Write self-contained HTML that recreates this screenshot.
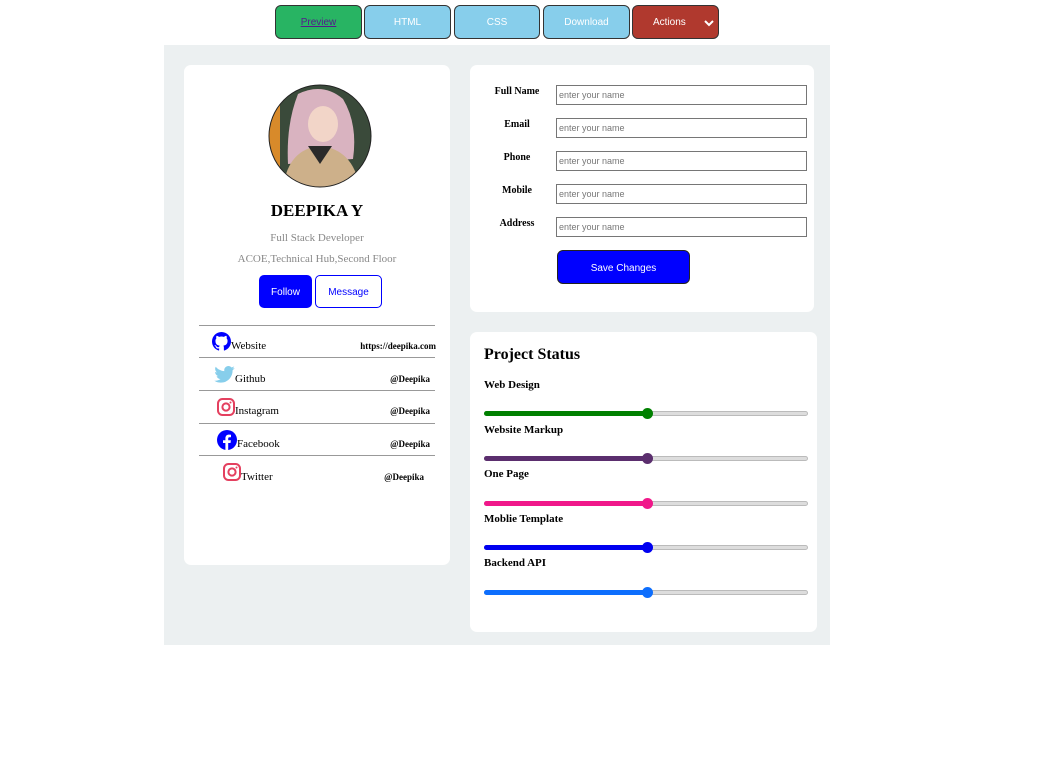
<!DOCTYPE html>
<html><head><meta charset="utf-8"><style>
*{margin:0;padding:0;box-sizing:border-box}
body{width:1045px;height:768px;background:#fff;position:relative;font-family:"Liberation Serif",serif;overflow:hidden}
.a{position:absolute}
.tb{position:absolute;top:5px;height:34px;border:1px solid #333;border-radius:6px;font-family:"Liberation Sans",sans-serif;font-size:10px;color:#fff;display:flex;align-items:center;justify-content:center}
.card{position:absolute;background:#fff;border-radius:7px}
.lbl{position:absolute;font-weight:bold;font-size:10px;width:70px;text-align:center;left:482px}
.inp{position:absolute;left:556px;width:251px;height:20px;border:1px solid #767676;font-family:"Liberation Sans",sans-serif;font-size:9px;color:#777;padding:4px 0 0 2px}
.row{position:absolute;left:199px;width:236px;border-top:1px solid #999;height:33px}
.row span{position:absolute;font-size:11px}
.row b{position:absolute;font-size:9px;right:0}
.sl{position:absolute;left:484px;width:324px;height:5px;border:1px solid #bbb;border-radius:3px;background:#ddd}
.sl i{position:absolute;left:-1px;top:-1px;height:5px;width:163px;border-radius:3px}
.sl em{position:absolute;left:157px;top:-4px;width:11px;height:11px;border-radius:50%}
.pl{position:absolute;left:484px;font-weight:bold;font-size:11px}
</style></head><body>
<div class="tb" style="left:275px;width:87px;background:#28b463"><u style="color:#551a8b">Preview</u></div>
<div class="tb" style="left:364px;width:87px;background:#87ceeb">HTML</div>
<div class="tb" style="left:454px;width:86px;background:#87ceeb">CSS</div>
<div class="tb" style="left:543px;width:87px;background:#87ceeb">Download</div>
<div class="tb" style="left:632px;width:87px;background:#b0392e;justify-content:flex-start;padding-left:20px">Actions<svg class="a" style="left:71px;top:13px" width="10" height="8" viewBox="0 0 10 8"><path d="M1 2l4 4 4-4" stroke="#fff" stroke-width="2" fill="none"/></svg></div>

<div class="a" style="left:164px;top:45px;width:666px;height:600px;background:#ecf0f1"></div>

<div class="card" style="left:184px;top:65px;width:266px;height:500px"></div>
<svg class="a" style="left:268px;top:84px" width="104" height="104" viewBox="0 0 104 104">
<defs><clipPath id="c"><circle cx="52" cy="52" r="51"/></clipPath></defs>
<g clip-path="url(#c)">
<rect width="104" height="104" fill="#3a4a3a"/>
<rect x="0" y="20" width="12" height="70" fill="#d88a2a"/>
<path d="M30 10 Q55 -2 75 15 Q90 40 85 75 L20 80 Q18 40 30 10Z" fill="#d9b3c0"/>
<ellipse cx="55" cy="40" rx="15" ry="18" fill="#f2d5c8"/>
<path d="M15 104 Q20 65 52 62 Q85 65 92 104Z" fill="#cdb08a"/>
<path d="M40 62 L52 80 L64 62Z" fill="#2a2a2a"/>
</g>
<circle cx="52" cy="52" r="51" fill="none" stroke="#222" stroke-width="1"/>
</svg>
<div class="a" style="left:184px;top:201px;width:266px;text-align:center;font-weight:bold;font-size:17px">DEEPIKA Y</div>
<div class="a" style="left:184px;top:232px;width:266px;text-align:center;font-size:11px;color:#888">Full Stack Developer</div>
<div class="a" style="left:184px;top:253px;width:266px;text-align:center;font-size:11px;color:#888">ACOE,Technical Hub,Second Floor</div>
<div class="a" style="left:259px;top:275px;width:53px;height:33px;background:#00f;border-radius:5px;color:#fff;font:10px 'Liberation Sans',sans-serif;display:flex;align-items:center;justify-content:center;padding-top:2px">Follow</div>
<div class="a" style="left:315px;top:275px;width:67px;height:33px;border:1px solid #00f;border-radius:5px;color:#00f;font:10px 'Liberation Sans',sans-serif;display:flex;align-items:center;justify-content:center;padding-top:2px">Message</div>

<div class="row" style="top:325px"><svg class="a" style="left:13px;top:6px" width="19" height="19" viewBox="0 0 16 16"><path fill="#00f" d="M8 0C3.6 0 0 3.6 0 8c0 3.5 2.3 6.5 5.5 7.6.4.1.5-.2.5-.4v-1.4c-2.2.5-2.7-1-2.7-1-.4-.9-.9-1.2-.9-1.2-.7-.5.1-.5.1-.5.8.1 1.200.8 1.2.8.7 1.3 1.9.9 2.3.7.1-.5.3-.9.5-1.1-1.8-.2-3.6-.9-3.6-4 0-.9.3-1.6.8-2.1-.1-.2-.4-1 .1-2.1 0 0 .7-.2 2.2.8.6-.2 1.3-.3 2-.3s1.4.1 2 .3c1.5-1 2.2-.8 2.2-.8.4 1.1.2 1.9.1 2.1.5.6.8 1.3.8 2.1 0 3.1-1.9 3.8-3.600 4 .3.3.5.8.5 1.5v2.2c0 .2.1.5.6.4C13.7 14.5 16 11.5 16 8c0-4.4-3.6-8-8-8z"/></svg><span style="left:32px;top:14px">Website</span><b style="top:15px;right:-1px">https://deepika.com</b></div>
<div class="row" style="top:357px"><svg class="a" style="left:15px;top:8px" width="21" height="17" viewBox="0 0 24 20"><path fill="#87ceeb" d="M24 2.4c-.9.4-1.8.6-2.8.8 1-.6 1.8-1.6 2.2-2.7-1 .6-2 1-3.1 1.2C19.3.7 18 0 16.6 0c-2.7 0-4.9 2.2-4.9 4.9 0 .4 0 .8.1 1.1C7.7 5.8 4.1 3.9 1.7.9c-.4.7-.7 1.6-.7 2.5 0 1.7.9 3.200 2.2 4.1-.8 0-1.6-.2-2.2-.6v.1c0 2.4 1.7 4.4 3.9 4.8-.4.1-.8.2-1.3.2-.3 0-.6 0-.9-.1.6 2 2.4 3.4 4.6 3.4-1.7 1.3-3.8 2.1-6.1 2.1H0c2.2 1.4 4.8 2.2 7.5 2.2 9.1 0 14-7.5 14-14v-.6c1-.7 1.8-1.6 2.5-2.6z"/></svg><span style="left:36px;top:15px">Github</span><b style="top:16px;right:5px">@Deepika</b></div>
<div class="row" style="top:390px"><svg class="a" style="left:18px;top:7px" width="18" height="18" viewBox="0 0 18 18"><rect x="1" y="1" width="16" height="16" rx="4.5" fill="none" stroke="#e4405f" stroke-width="2"/><circle cx="9" cy="9" r="3.6" fill="none" stroke="#e4405f" stroke-width="2"/><circle cx="13.5" cy="4.5" r="1" fill="#e4405f"/></svg><span style="left:36px;top:14px">Instagram</span><b style="top:15px;right:5px">@Deepika</b></div>
<div class="row" style="top:423px"><svg class="a" style="left:18px;top:6px" width="20" height="20" viewBox="0 0 20 20"><circle cx="10" cy="10" r="10" fill="#00f"/><path fill="#fff" d="M11.2 20v-7h2.3l.4-2.8h-2.7V8.5c0-.8.3-1.3 1.4-1.3H14V4.7c-.3 0-1.1-.1-2.1-.1-2.1 0-3.5 1.3-3.5 3.6v2H6v2.8h2.4V20z"/></svg><span style="left:38px;top:14px">Facebook</span><b style="top:15px;right:5px">@Deepika</b></div>
<div class="row" style="top:455px"><svg class="a" style="left:24px;top:7px" width="18" height="18" viewBox="0 0 18 18"><rect x="1" y="1" width="16" height="16" rx="4.5" fill="none" stroke="#e4405f" stroke-width="2"/><circle cx="9" cy="9" r="3.6" fill="none" stroke="#e4405f" stroke-width="2"/><circle cx="13.5" cy="4.5" r="1" fill="#e4405f"/></svg><span style="left:42px;top:15px">Twitter</span><b style="top:16px;right:11px">@Deepika</b></div>

<div class="card" style="left:470px;top:65px;width:344px;height:247px"></div>
<div class="lbl" style="top:86px">Full Name</div>
<div class="lbl" style="top:119px">Email</div>
<div class="lbl" style="top:152px">Phone</div>
<div class="lbl" style="top:185px">Mobile</div>
<div class="lbl" style="top:218px">Address</div>
<div class="inp" style="top:85px">enter your name</div>
<div class="inp" style="top:118px">enter your name</div>
<div class="inp" style="top:151px">enter your name</div>
<div class="inp" style="top:184px">enter your name</div>
<div class="inp" style="top:217px">enter your name</div>
<div class="a" style="left:557px;top:250px;width:133px;height:34px;background:#00f;border:1px solid #222;border-radius:6px;color:#fff;font:10px 'Liberation Sans',sans-serif;display:flex;align-items:center;justify-content:center;padding-top:2px">Save Changes</div>

<div class="card" style="left:470px;top:332px;width:347px;height:300px"></div>
<div class="a" style="left:484px;top:346px;font-weight:bold;font-size:16px">Project Status</div>
<div class="pl" style="top:379px">Web Design</div>
<div class="sl" style="top:411px"><i style="background:#008000"></i><em style="background:#008000"></em></div>
<div class="pl" style="top:424px">Website Markup</div>
<div class="sl" style="top:456px"><i style="background:#5b2e6e"></i><em style="background:#5b2e6e"></em></div>
<div class="pl" style="top:468px">One Page</div>
<div class="sl" style="top:501px"><i style="background:#f0188a"></i><em style="background:#f0188a"></em></div>
<div class="pl" style="top:513px">Moblie Template</div>
<div class="sl" style="top:545px"><i style="background:#0000f0"></i><em style="background:#0000f0"></em></div>
<div class="pl" style="top:557px">Backend API</div>
<div class="sl" style="top:590px"><i style="background:#0d6efd"></i><em style="background:#0d6efd"></em></div>
</body></html>
